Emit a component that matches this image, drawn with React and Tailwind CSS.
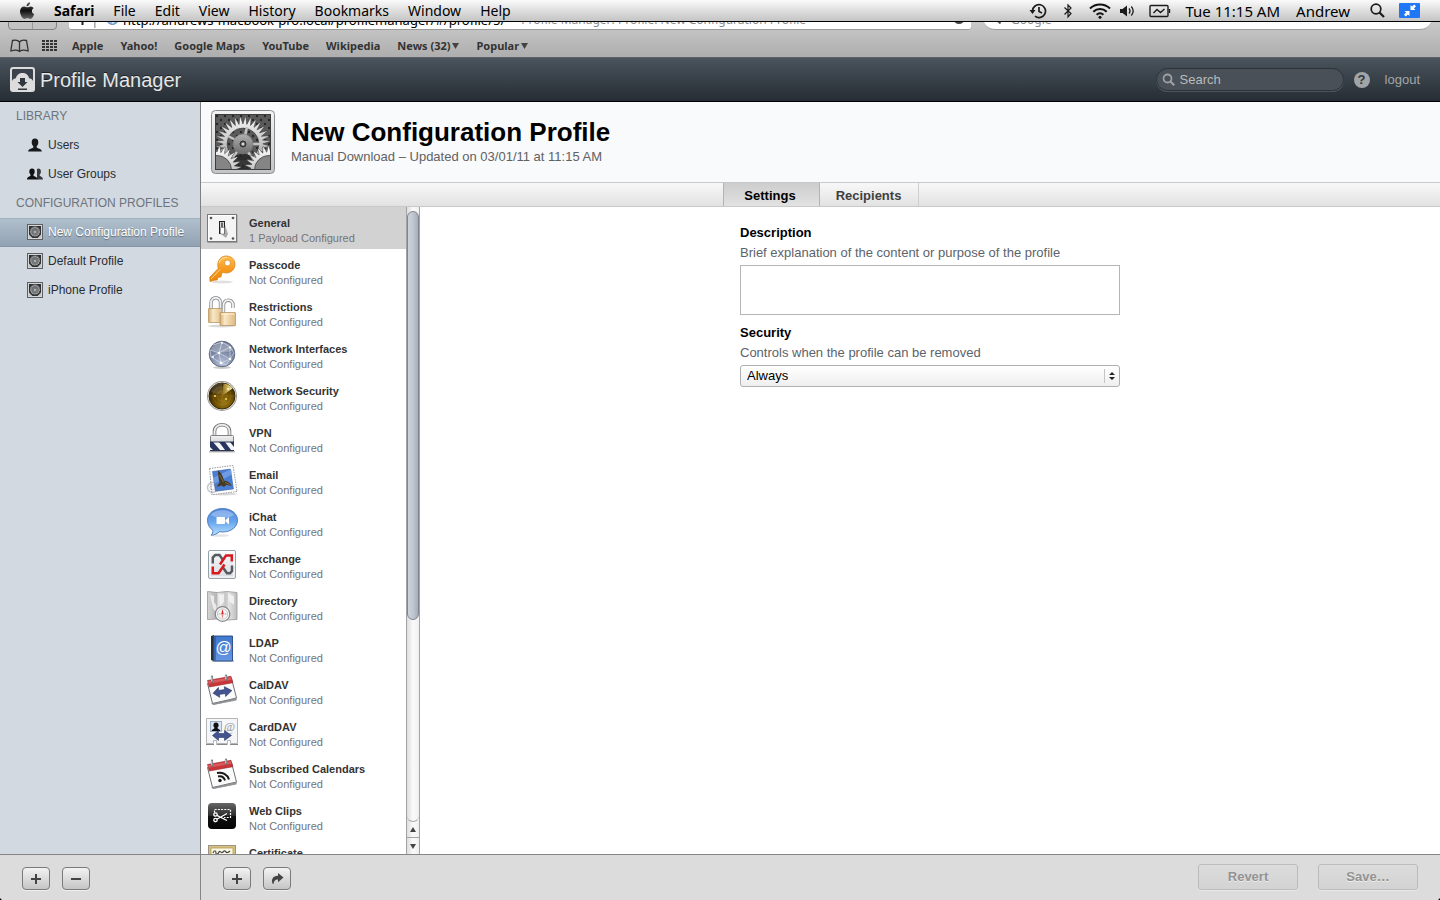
import { useState } from 'react';
import { clsx } from 'clsx';

// closed outline of a cog wheel with n pointed teeth
const gearPath = (cx, cy, inner, outer, n, turn = 0) => {
  const points = [];
  for (let i = 0; i < n; i++) {
    [[0, inner], [0.4, outer], [0.55, outer], [0.95, inner]].forEach(([step, r]) => {
      const a = ((i + step) / n) * Math.PI * 2 + turn;
      points.push(`${(cx + Math.cos(a) * r).toFixed(2)} ${(cy + Math.sin(a) * r).toFixed(2)}`);
    });
  }
  return `M${points.join('L')}Z`;
};

const Icon = ({ children, size = 32, className }) => (
  <svg className={clsx('shrink-0', className)} width={size} height={size} viewBox="0 0 32 32" aria-hidden="true">
    {children}
  </svg>
);

const GeneralIcon = () => (
  <Icon>
    <rect x="1.5" y="3" width="30" height="28" fill="#000" opacity="0.25" />
    <rect x="1.5" y="2.5" width="29" height="27" fill="#f4f4f4" stroke="#77797b" />
    <path d="M2.5 29V3.500H30" fill="none" stroke="#fff" />
    <g fill="#555">
      <circle cx="5" cy="6" r="1.300" />
      <circle cx="27" cy="6" r="1.300" />
      <circle cx="5" cy="26.500" r="1.300" />
      <circle cx="27" cy="26.500" r="1.300" />
    </g>
    <path d="M15 22l4-9 3 9-2 4z" fill="#aaa" />
    <rect x="13.500" y="9.500" width="5" height="12" fill="#d8d8d8" stroke="#222" />
    <path d="M15 10.500h2v5h-2z" fill="#666" />
    <path d="M14.500 15.500h4v6.500h-4z" fill="#fff" stroke="#555" strokeWidth="0.500" />
  </Icon>
);

const KeyIcon = () => (
  <Icon>
    <defs>
      <linearGradient id="key" x1="0" y1="0" x2="0" y2="1">
        <stop offset="0" stopColor="#ffc04d" />
        <stop offset="0.5" stopColor="#f79a20" />
        <stop offset="1" stopColor="#e9860c" />
      </linearGradient>
    </defs>
    <ellipse cx="16" cy="28" rx="11" ry="1.500" fill="#000" opacity="0.12" />
    <path
      fillRule="evenodd"
      d="M20 2c5.500 0 9 3.300 9 8.300 0 5-4 8.700-8.500 8.700-1.400 0-2.500-.3-3.500-.8L15.500 20l-.5 3-3 .3-.8 2.700-3 .3L4 27.500l-.2-4.300 8.400-8.700C10.500 8 14 2 20 2zm1.500 4a3 3 0 100 6 3 3 0 000-6z"
      fill="url(#key)"
      stroke="#d67c11"
      strokeWidth="0.700"
    />
    <path d="M5 25l9-9.500" stroke="#ffd48a" strokeWidth="1" />
    <path d="M13 9c.8-3.500 4-5.700 8-5.600" fill="none" stroke="#ffe0a6" strokeWidth="1" />
  </Icon>
);

const LocksIcon = () => (
  <Icon>
    <defs>
      <linearGradient id="brass" x1="0" x2="1">
        <stop offset="0" stopColor="#d2ae76" />
        <stop offset="0.3" stopColor="#f9e8c6" />
        <stop offset="1" stopColor="#dcb982" />
      </linearGradient>
    </defs>
    <ellipse cx="16" cy="30" rx="14" ry="1.500" fill="#000" opacity="0.15" />
    <path d="M5 13V7c0-7 9.500-7 9.500 0v6" fill="none" stroke="#8b8d90" strokeWidth="3.400" />
    <path d="M5 13V7c0-7 9.500-7 9.500 0v6" fill="none" stroke="#f0f1f1" strokeWidth="1.800" />
    <rect x="2.500" y="12.500" width="15" height="14" rx="0.500" fill="url(#brass)" stroke="#b58d55" strokeWidth="0.700" />
    <path d="M17.500 17V9c0-6.500 10-6.500 9.500.500V12" fill="none" stroke="#8b8d90" strokeWidth="3.400" />
    <path d="M17.500 17V9c0-6.500 10-6.500 9.500.500V12" fill="none" stroke="#f3f3f3" strokeWidth="1.800" />
    <rect x="14" y="16.500" width="15.500" height="13" rx="0.500" fill="url(#brass)" stroke="#b58d55" strokeWidth="0.700" />
    <path d="M15 18h13.500" stroke="#fff3d6" />
  </Icon>
);

const NetworkIcon = () => (
  <Icon>
    <defs>
      <radialGradient id="globe" cx="0.5" cy="0.85" r="0.9">
        <stop offset="0" stopColor="#b7c1d8" />
        <stop offset="0.5" stopColor="#7d89a6" />
        <stop offset="1" stopColor="#5c6988" />
      </radialGradient>
    </defs>
    <ellipse cx="16" cy="29.500" rx="9" ry="1.500" fill="#000" opacity="0.2" />
    <circle cx="16" cy="16" r="12.800" fill="url(#globe)" stroke="#626d85" />
    <g fill="none" stroke="#dfe5f2" strokeWidth="0.700" opacity="0.85">
      <path d="M4 12l9 3 11-6-8-5-9 3M13 15l2 10 9-4-11-6 3-11M15 25L5 19l8-4M24 9l0 12 4-6-4-6M5 19l-1-7M24 21l-4 6-5-2" />
    </g>
    <path d="M5 12C7 2 25 2 27 12c-6 3-16 3-22 0z" fill="#fff" opacity="0.25" />
    <g fill="#fff">
      <circle cx="13" cy="15" r="1.300" />
      <circle cx="24" cy="9.500" r="1.100" />
      <circle cx="15" cy="25" r="1.300" />
      <circle cx="24" cy="21" r="1.300" />
      <circle cx="7" cy="19" r="1" />
      <circle cx="16" cy="5" r="0.900" />
    </g>
  </Icon>
);

const RadarIcon = () => (
  <Icon>
    <defs>
      <radialGradient id="radar" cx="0.6" cy="0.75" r="0.7">
        <stop offset="0" stopColor="#9a7812" />
        <stop offset="0.6" stopColor="#644600" />
        <stop offset="1" stopColor="#2c1e00" />
      </radialGradient>
      <linearGradient id="sweep" x1="0" x2="1">
        <stop offset="0" stopColor="#8d6b10" />
        <stop offset="1" stopColor="#fff3a8" />
      </linearGradient>
    </defs>
    <circle cx="16" cy="16" r="15" fill="#9c9a94" />
    <circle cx="16" cy="16" r="14" fill="#ececea" />
    <circle cx="16" cy="16" r="13" fill="url(#radar)" stroke="#33270a" />
    <path d="M16 16L17.500 3.500c4 .3 7 2 9 5z" fill="url(#sweep)" />
    <g fill="none" stroke="#c9a444" strokeWidth="0.500" opacity="0.4">
      <circle cx="16" cy="16" r="5" />
      <circle cx="16" cy="16" r="9" />
      <path d="M3 16h26M16 3v26" />
    </g>
    <path d="M5 12C7 3 14 3 16 3.500V14C11 14 8 13 5 12z" fill="#fff" opacity="0.14" />
    <circle cx="9" cy="16" r="1" fill="#ffe27a" />
    <circle cx="20" cy="19" r="0.900" fill="#ffe27a" />
    <circle cx="22" cy="9" r="0.900" fill="#fff" />
  </Icon>
);

const VpnIcon = () => (
  <Icon>
    <defs>
      <linearGradient id="steel" x1="0" y1="0" x2="0" y2="1">
        <stop offset="0" stopColor="#f2f2f2" />
        <stop offset="1" stopColor="#b3b5b8" />
      </linearGradient>
    </defs>
    <rect x="3" y="29" width="26" height="1.500" fill="#000" opacity="0.25" />
    <path d="M8.500 14V9.500c0-9 15-9 15 0V14" fill="none" stroke="#707275" strokeWidth="3.600" />
    <path d="M8.500 14V9.500c0-9 15-9 15 0V14" fill="none" stroke="#ebebeb" strokeWidth="2" />
    <rect x="4.500" y="13.500" width="23" height="15.500" rx="1" fill="url(#steel)" stroke="#808286" />
    <rect x="4" y="20" width="24" height="8" fill="#f6f7fa" />
    <path d="M4 20h3l7 8H7l-3-3zM13 20h6l6 8h-6zM24 20h4v5z" fill="#27355f" />
    <path d="M4 20h24M4 28.500h24" stroke="#1e2847" strokeWidth="0.900" />
  </Icon>
);

const EmailIcon = () => (
  <Icon>
    <ellipse cx="18" cy="30" rx="13" ry="1.500" fill="#000" opacity="0.15" />
    <path d="M3.500 4.500L27 1.500l4 26-25 3.300z" fill="#fff" stroke="#97999d" strokeWidth="1" strokeDasharray="1.500 1" />
    <path d="M6.500 7.500l18-2.400 2.900 19.800L9.500 27.300z" fill="#4a7dd4" stroke="#335ea8" strokeWidth="0.600" />
    <path d="M7 14l18-9 .8 5.500L8 20z" fill="#8ab0ec" opacity="0.6" />
    <path d="M12 6.500c3 1.500 5 6 6 10 3 .5 7 2 7.500 5.500-2-1-4-1-5.500-1l-2 2-2.500-1.500-5 1.500 3-4.500C12.500 15 12 10.500 12 6.500z" fill="#453a26" />
    <path d="M13.500 11l4 7M19 18.500l5 2" stroke="#8c7747" strokeWidth="0.800" />
    <circle cx="6.500" cy="23.500" r="5" fill="none" stroke="#6f7686" strokeWidth="1.500" opacity="0.4" />
    <circle cx="6.500" cy="23.500" r="2.600" fill="none" stroke="#6f7686" strokeWidth="0.800" opacity="0.4" />
  </Icon>
);

const ChatIcon = () => (
  <Icon>
    <defs>
      <linearGradient id="bubble" x1="0" y1="0" x2="0" y2="1">
        <stop offset="0" stopColor="#4f86dd" />
        <stop offset="0.5" stopColor="#68a5ed" />
        <stop offset="1" stopColor="#b7e2ff" />
      </linearGradient>
    </defs>
    <ellipse cx="14" cy="29.500" rx="9" ry="1.300" fill="#000" opacity="0.1" />
    <path
      d="M16.500 2.500c8.500 0 15 5 15 11.700S25 26 16.500 26c-1 0-2-.1-3-.3-2 2-5 3.400-8.500 3.500 1.500-1.300 2-3 1.800-5C3.500 22 1.500 18.500 1.500 14.200 1.500 7.500 8 2.500 16.500 2.500z"
      fill="url(#bubble)"
      stroke="#4574b8"
      strokeWidth="0.900"
    />
    <path d="M5 9c3-6.500 20-6.500 23 0-5 3.500-18 3.500-23 0z" fill="#fff" opacity="0.3" />
    <rect x="10.500" y="11" width="8.500" height="7" rx="0.800" fill="#fff" />
    <path d="M19.500 14l3.500-3v7.500l-3.500-3z" fill="#fff" />
  </Icon>
);

const ExchangeIcon = () => (
  <Icon>
    <defs>
      <linearGradient id="tile" x1="0" y1="0" x2="0" y2="1">
        <stop offset="0" stopColor="#f8f9fa" />
        <stop offset="1" stopColor="#d7dce1" />
      </linearGradient>
    </defs>
    <rect x="2.500" y="2.500" width="27" height="28" rx="1.500" fill="url(#tile)" stroke="#99a2ab" />
    <rect x="4" y="4" width="24" height="25" fill="none" stroke="#fff" />
    <g fill="none" strokeWidth="2.500" strokeLinejoin="miter">
      <path d="M6.800 15.500V9.500l2.400-2.400h4.300l3.500 5" stroke="#555b60" />
      <path d="M17 19.500l4 5.800h3l2-2.300v-5.500" stroke="#555b60" />
      <path d="M14 16.500l6-9h5.800v6" stroke="#d91920" />
      <path d="M6.800 18.500v6.700h5.700l6-8.700" stroke="#d91920" />
    </g>
  </Icon>
);

const DirectoryIcon = () => (
  <Icon>
    <defs>
      <linearGradient id="map" x1="0" x2="1">
        <stop offset="0" stopColor="#d6d6d6" />
        <stop offset="0.3" stopColor="#b6b6b6" />
        <stop offset="0.32" stopColor="#eee" />
        <stop offset="0.62" stopColor="#c6c6c6" />
        <stop offset="0.65" stopColor="#ededed" />
        <stop offset="1" stopColor="#bdbdbd" />
      </linearGradient>
    </defs>
    <path d="M1.500 1.500l9.500 1 10-1 10 1v27l-10 .5-10-1-9.500.500z" fill="url(#map)" stroke="#979797" strokeWidth="0.800" />
    <path d="M4 5l4 1v6l3 4v8l-4-6zM13 5l5-1v8l-4 4zM22 4l6 2v9l-5-4z" fill="#f8f8f8" opacity="0.75" />
    <path d="M11 2.500V29M21 1.500V30" stroke="#999" strokeWidth="0.600" />
    <circle cx="16.500" cy="24" r="7.300" fill="#fff" stroke="#85878a" strokeWidth="1.300" />
    <circle cx="16.500" cy="24" r="5.200" fill="#f6f6f6" stroke="#b5b7b9" strokeWidth="0.800" />
    <path d="M16.500 19l1.200 5h-2.400z" fill="#d8252b" />
    <path d="M16.500 29l1.200-5h-2.400z" fill="#e88a8a" />
    <path d="M12.500 24h2M18.500 24h2" stroke="#777" strokeWidth="0.600" />
  </Icon>
);

const LdapIcon = () => (
  <Icon>
    <defs>
      <linearGradient id="book" x1="0" y1="0" x2="0" y2="1">
        <stop offset="0" stopColor="#3f78cd" />
        <stop offset="1" stopColor="#6697e3" />
      </linearGradient>
    </defs>
    <rect x="6" y="28" width="22" height="2" fill="#000" opacity="0.2" />
    <path d="M5 4l3-1v26l-3-1z" fill="#2b3138" />
    <path d="M7.500 4H26.500v25h-19z" fill="url(#book)" stroke="#244880" strokeWidth="0.900" />
    <path d="M9 4.500v24" stroke="#27528f" strokeWidth="1.200" />
    <text x="17.500" y="21" textAnchor="middle" fontSize="16" fill="#fff" fontFamily="Liberation Sans, sans-serif">
      @
    </text>
  </Icon>
);

const CalendarBase = ({ children }) => (
  <Icon>
    <path d="M5 29l25-5 .5 2.500L7 31z" fill="#000" opacity="0.35" />
    <path d="M1.500 9.500l24-5L30.500 24 6.500 29.500z" fill="#fbfbfb" stroke="#5e6063" strokeWidth="0.900" />
    <path d="M6.500 29.500l24-5.500v2L7 31z" fill="#8f9194" />
    <path d="M1.500 6.500L25 2.300l1.800 6.400L3.300 13z" fill="#c9363a" stroke="#9b2226" strokeWidth="0.600" />
    <path d="M2 7.200l23-4.100.6 2.700-23 4z" fill="#e37374" opacity="0.6" />
    <path d="M6 8V2.500M20 6V1.500" stroke="#6d6f72" strokeWidth="2.200" strokeLinecap="round" />
    <path d="M5.800 7V3M19.800 5V2" stroke="#eceded" strokeWidth="0.900" strokeLinecap="round" />
    {children}
  </Icon>
);

const SyncArrow = ({ x, y }) => (
  <g transform={`translate(${x} ${y})`}>
    <path d="M0 5l6-5v3h6V0l7 5-7 5V7H6v3z" fill="#42538f" stroke="#2b386a" strokeWidth="0.600" />
  </g>
);

const CalDavIcon = () => (
  <CalendarBase>
    <g transform="rotate(-8 16 18)">
      <SyncArrow x={7} y={13} />
    </g>
  </CalendarBase>
);

const SubscribedIcon = () => (
  <CalendarBase>
    <g fill="none" stroke="#191919" strokeWidth="2">
      <path d="M12 18.500c3.500-.8 6 .7 7 4" />
      <path d="M11 15c5.500-1.200 10.300 1.500 12 6.500" />
    </g>
    <circle cx="14" cy="22.500" r="1.700" fill="#191919" />
  </CalendarBase>
);

const CardDavIcon = () => (
  <Icon>
    <path d="M.5 2.500h31v25h-7v-3h-3v3H10.500v-3h-3v3h-7z" fill="#f5f6f7" stroke="#b3b5b7" />
    <path d="M0 28.500h8M10.500 28.500H21.500M24 28.500h8" stroke="#77797b" strokeWidth="0.900" />
    <rect x="4.500" y="5.500" width="11" height="10" fill="#d8e3f3" stroke="#8c9fbd" strokeWidth="0.800" />
    <path d="M10 6.500c1.700 0 2.600 1.200 2.600 2.800 0 1-.5 2-1.200 2.600.2 1 2.600 1 3.100 3.100h-9c.5-2.100 2.900-2.100 3.100-3.100-.7-.6-1.200-1.600-1.200-2.600 0-1.600.9-2.800 2.600-2.800z" fill="#111" />
    <text x="23.500" y="14.500" textAnchor="middle" fontSize="12" fill="#8f9296" fontFamily="Liberation Serif, serif">
      @
    </text>
    <SyncArrow x={6.500} y={14.500} />
  </Icon>
);

const WebClipIcon = () => (
  <Icon>
    <defs>
      <linearGradient id="clip" x1="0" y1="0" x2="0" y2="1">
        <stop offset="0" stopColor="#666" />
        <stop offset="0.5" stopColor="#2b2b2b" />
        <stop offset="0.52" stopColor="#111" />
        <stop offset="1" stopColor="#050505" />
      </linearGradient>
    </defs>
    <rect x="2" y="3" width="28" height="26" rx="4" fill="url(#clip)" />
    <path d="M8.500 12.500V9.500H24.500V17.500H18" fill="none" stroke="#fff" strokeWidth="1.200" strokeDasharray="2 1.200" />
    <g fill="none" stroke="#fff" strokeWidth="1.300">
      <circle cx="9.500" cy="14.500" r="1.700" />
      <circle cx="9.500" cy="20" r="1.700" />
      <path d="M10.800 15.300L21 20.500M10.800 19.200L21 13.500" />
    </g>
  </Icon>
);

const CertificateIcon = () => (
  <Icon>
    <rect x="2.500" y="3.500" width="27" height="25" fill="#d7c07f" stroke="#9a9488" />
    <rect x="5" y="6" width="22" height="20" fill="#fbf8e4" stroke="#b39b55" strokeWidth="0.800" />
    <path d="M7 11c1-3 3-3 3 0s2 1 3-1 2 2 4 0 2-1 3 0 2 1 4-1" fill="none" stroke="#444" strokeWidth="1.200" />
    <path d="M9 15h14M9 18h14" stroke="#a9a38a" />
  </Icon>
);

const GearTile = () => (
  <svg className="size-16 shrink-0" viewBox="0 0 64 64" aria-hidden="true">
    <defs>
      <linearGradient id="frame" x1="0" y1="0" x2="0" y2="1">
        <stop offset="0" stopColor="#f4f4f4" />
        <stop offset="1" stopColor="#c3c4c6" />
      </linearGradient>
      <linearGradient id="wheel" x1="0" y1="6" x2="0" y2="60" gradientUnits="userSpaceOnUse">
        <stop offset="0" stopColor="#fafafa" />
        <stop offset="1" stopColor="#8e8e8e" />
      </linearGradient>
      <linearGradient id="hub" x1="0" y1="0" x2="0" y2="1">
        <stop offset="0" stopColor="#b0b0b0" />
        <stop offset="1" stopColor="#6c6c6c" />
      </linearGradient>
      <linearGradient id="corner" x1="0" y1="38" x2="0" y2="62" gradientUnits="userSpaceOnUse">
        <stop offset="0" stopColor="#fff" />
        <stop offset="1" stopColor="#bdbdbd" />
      </linearGradient>
      <pattern id="mesh" width="8" height="8" patternUnits="userSpaceOnUse">
        <rect width="8" height="8" fill="#5a5a5a" />
        <circle cx="2" cy="2" r="1.200" fill="#262626" />
        <circle cx="6" cy="6" r="1.200" fill="#262626" />
      </pattern>
      <clipPath id="window">
        <rect x="5" y="5" width="54" height="54" />
      </clipPath>
    </defs>
    <rect x="0.500" y="0.500" width="63" height="63" rx="4" fill="url(#frame)" stroke="#8b8c8e" />
    <rect x="5" y="5" width="54" height="54" fill="url(#mesh)" />
    <g clipPath="url(#window)">
      <path
        fillRule="evenodd"
        d={`${gearPath(32, 34, 20, 27, 32)}M32 18a16 16 0 100 32 16 16 0 000-32Z`}
        fill="url(#wheel)"
        stroke="#333"
        strokeWidth="0.500"
      />
      <path d="M32 34l4-17M32 34h17M32 34L17 26M32 34L22 47M32 34l9 14" stroke="#c4c4c4" strokeWidth="2.500" />
      <path d="M20 60l4-14 8-3 8 3 4 14z" fill="#262626" opacity="0.85" />
      <path d={gearPath(6, 60, 18, 24, 28)} fill="url(#corner)" stroke="#333" strokeWidth="0.500" />
      <circle cx="6" cy="60" r="14.500" fill="#858585" stroke="#555" />
      <path d={gearPath(58, 60, 18, 24, 28, 0.1)} fill="url(#corner)" stroke="#333" strokeWidth="0.500" />
      <circle cx="58" cy="60" r="14.500" fill="#858585" stroke="#555" />
      <circle cx="32" cy="34" r="10" fill="url(#hub)" stroke="#777" strokeWidth="0.600" />
      <circle cx="32" cy="34" r="3" fill="#555" stroke="#2f2f2f" strokeWidth="1" />
      <circle cx="32" cy="34" r="1.500" fill="#d9d9d9" />
    </g>
    <rect x="4.500" y="4.500" width="55" height="55" fill="none" stroke="#3d3d3d" />
  </svg>
);

const ProfileIcon = () => (
  <svg className="shrink-0" width="16" height="16" viewBox="0 0 16 16" aria-hidden="true">
    <rect x="0.500" y="0.500" width="15" height="15" fill="#d3d5d7" stroke="#5d6064" />
    <rect x="2" y="2" width="12" height="12" fill="#303234" />
    <circle cx="8" cy="7.500" r="4.300" fill="#6d6f71" stroke="#a8aaac" strokeWidth="1.500" strokeDasharray="1.400 0.600" />
    <circle cx="8" cy="8" r="2.500" fill="#77797b" />
    <circle cx="8" cy="8" r="0.900" fill="#c6c6c6" />
    <path d="M2 14v-3.500l3.500 3.500zM14 14v-3.500L10.500 14z" fill="#c3c5c7" />
  </svg>
);

const UserIcon = () => (
  <svg className="shrink-0" width="16" height="16" viewBox="0 0 16 16" aria-hidden="true">
    <path d="M8 1.500c2.200 0 3.400 1.500 3.300 3.700 0 1.700-.6 3-1.600 3.900v1.400c.8 1 5.100 1 5.100 4H1.200c0-3 4.300-3 5.100-4V9.100c-1-.9-1.600-2.200-1.600-3.900C4.600 3 5.800 1.500 8 1.500z" fill="#17191b" />
  </svg>
);

const GroupIcon = () => (
  <svg className="shrink-0" width="16" height="16" viewBox="0 0 16 16" aria-hidden="true">
    <path d="M11.300 2.500c1.700 0 2.700 1.200 2.600 3 0 1.400-.4 2.400-1.200 3.100v1.100c.7.900 3.300 1 3.300 3.800h-6V3.300c.4-.5.800-.8 1.300-.8z" fill="#33373b" />
    <path d="M5 2.500c1.800 0 2.800 1.200 2.700 3 0 1.400-.5 2.400-1.200 3.100v1.100c.7.900 4 1 4 3.800H0c0-2.800 2.800-2.900 3.500-3.800V8.600c-.8-.7-1.200-1.700-1.200-3.100 0-1.800 1-3 2.700-3z" fill="#101112" />
  </svg>
);

const menus = ['File', 'Edit', 'View', 'History', 'Bookmarks', 'Window', 'Help'];
const bookmarks = ['Apple', 'Yahoo!', 'Google Maps', 'YouTube', 'Wikipedia', 'News (32)', 'Popular'];

const payloads = [
  { name: 'General', status: '1 Payload Configured', icon: GeneralIcon },
  { name: 'Passcode', icon: KeyIcon },
  { name: 'Restrictions', icon: LocksIcon },
  { name: 'Network Interfaces', icon: NetworkIcon },
  { name: 'Network Security', icon: RadarIcon },
  { name: 'VPN', icon: VpnIcon },
  { name: 'Email', icon: EmailIcon },
  { name: 'iChat', icon: ChatIcon },
  { name: 'Exchange', icon: ExchangeIcon },
  { name: 'Directory', icon: DirectoryIcon },
  { name: 'LDAP', icon: LdapIcon },
  { name: 'CalDAV', icon: CalDavIcon },
  { name: 'CardDAV', icon: CardDavIcon },
  { name: 'Subscribed Calendars', icon: SubscribedIcon },
  { name: 'Web Clips', icon: WebClipIcon },
  { name: 'Certificate', icon: CertificateIcon },
];

const MenuBar = () => (
  <div className="flex h-[22px] shrink-0 items-center justify-between border-b border-black bg-gradient-to-b from-[#fafafa] to-[#c4c4c4] pr-5 pl-[19px] font-['Noto_Sans',sans-serif] text-sm leading-5 text-black">
    <nav className="flex items-center gap-[19px]">
      <svg width="16" height="18" viewBox="0 0 16 18" aria-hidden="true">
        <defs>
          <linearGradient id="apple" x1="0" y1="0" x2="0" y2="1">
            <stop offset="0" stopColor="#555" />
            <stop offset="0.5" stopColor="#111" />
            <stop offset="1" stopColor="#666" />
          </linearGradient>
        </defs>
        <path
          d="M11 .3c.1 1-.3 2-.9 2.700-.6.8-1.600 1.300-2.600 1.300-.1-1 .4-2 .9-2.600C9 .9 10.100.4 11 .3zM14.600 6.200c-1.100.7-1.700 1.600-1.700 2.900 0 1.500.9 2.600 2.200 3.100-.5 1.500-1.900 4.700-3.700 4.700-1.100 0-1.500-.7-2.900-.7s-1.900.7-2.900.7C3.600 17 1 13 1 9.500c0-3.300 2.100-5.100 4.200-5.100 1.300 0 2.400.9 3.200.9.800 0 2-.9 3.500-.9 1.100 0 2.100.7 2.700 1.800z"
          fill="url(#apple)"
        />
      </svg>
      <button className="font-bold">Safari</button>
      {menus.map((menu) => (
        <button key={menu}>{menu}</button>
      ))}
    </nav>
    <div className="flex items-center">
      <svg className="mr-4" width="18" height="16" viewBox="0 0 18 16" fill="none" stroke="#1b1b1b" strokeWidth="1.700" aria-hidden="true">
        <path d="M3.500 8A6.500 6.500 0 1 1 6 13.200M10 4v4.500l3 1.500" />
        <path d="M.5 7h6L3.500 11z" fill="#1b1b1b" stroke="none" />
      </svg>
      <svg className="mr-4" width="10" height="16" viewBox="0 0 10 16" fill="none" stroke="#1b1b1b" strokeWidth="1.200" aria-hidden="true">
        <path d="M1.500 4.500l6.500 6L5 14V2l3 3-6.500 6.500" />
      </svg>
      <svg className="mr-2" width="22" height="16" viewBox="0 0 22 16" fill="none" stroke="#111" strokeWidth="2" aria-hidden="true">
        <path d="M1 5.500c5.500-5.300 14.500-5.300 20 0M4.300 8.700c3.800-3.700 9.600-3.700 13.400 0M7.600 11.800c2-1.900 4.800-1.900 6.800 0" />
        <circle cx="11" cy="14.200" r="1.500" fill="#111" stroke="none" />
      </svg>
      <svg className="mr-[14px]" width="16" height="14" viewBox="0 0 16 14" fill="none" stroke="#1b1b1b" strokeWidth="1.300" aria-hidden="true">
        <path d="M1 5h2.500L8 1.500v11L3.500 9H1z" fill="#1b1b1b" stroke="none" />
        <path d="M10 4.500c1.200 1.500 1.200 3.500 0 5M12.300 2.500c2.300 2.700 2.300 6.300 0 9" />
      </svg>
      <svg className="mr-[14px]" width="22" height="14" viewBox="0 0 22 14" fill="none" stroke="#1b1b1b" strokeWidth="1.400" aria-hidden="true">
        <rect x="1" y="1.500" width="18" height="11" rx="1" />
        <path d="M20.500 5v4M4.500 9L8 5.500l3.500 3L15.500 5" />
      </svg>
      <span className="mr-4 text-[15px]">Tue 11:15 AM</span>
      <button className="mr-5 text-[15px]">Andrew</button>
      <svg className="mr-[14px]" width="15" height="15" viewBox="0 0 15 15" fill="none" stroke="#1b1b1b" strokeWidth="1.700" aria-hidden="true">
        <circle cx="6" cy="6" r="4.800" />
        <path d="M9.500 9.500l4.500 4.500" strokeWidth="2.200" />
      </svg>
      <svg width="21" height="15" viewBox="0 0 21 15" aria-hidden="true">
        <rect width="21" height="15" rx="1" fill="#1f77f5" />
        <path d="M11.500 2v5h5l-1.600-1.600L17 3.300 15.200 1.500l-2.100 2.100zM10.500 13V8h-5l1.600 1.600L5 11.700l1.800 1.800 2.100-2.100z" fill="#fff" />
      </svg>
    </div>
  </div>
);

// only the lower edge of the address row shows below the menu bar
const BrowserBar = () => (
  <div className="shrink-0 bg-gradient-to-b from-[#c9c9c9] to-[#adadad] font-['Noto_Sans',sans-serif]">
    <div className="flex h-2 items-end gap-3 overflow-hidden px-2 text-xs leading-4">
      <div className="flex h-6 w-[49px] shrink-0 rounded border border-[#828282] bg-[#c3c3c3]">
        <span className="w-6 border-r border-[#9a9a9a]" />
      </div>
      <div className="flex h-6 flex-1 items-start overflow-hidden rounded-b-[3px] border-b border-[#9a9a9a] bg-white pt-[6px] pl-[11px] whitespace-nowrap text-black">
        <svg className="mr-[10px] shrink-0" width="16" height="16" viewBox="0 0 16 16" stroke="#222" strokeWidth="2" aria-hidden="true">
          <path d="M2.500 6v7M15.500 0v16" />
          <path d="M15.500 0v16" stroke="#ccc" />
        </svg>
        <svg className="mr-1 shrink-0" width="13" height="13" viewBox="0 0 13 13" aria-hidden="true">
          <circle cx="6.500" cy="6.500" r="6" fill="#8dbbe6" stroke="#5b88b8" />
          <path d="M4 7l3-2 2 3-2 4z" fill="#e9f3fb" />
        </svg>
        <span className="mr-4 text-[13px]">http://andrews-macbook-pro.local/profilemanager/#/profile/5/</span>
        <span className="text-[#8b8b8b]">Profile Manager: Profile: New Configuration Profile</span>
        <svg className="mr-[6px] ml-auto shrink-0" width="12" height="13" viewBox="0 0 12 13" fill="none" stroke="#444" strokeWidth="2" aria-hidden="true">
          <circle cx="6" cy="6.500" r="4.500" />
        </svg>
      </div>
      <div className="flex h-6 w-[449px] shrink-0 items-start gap-2.5 rounded-full border-b border-[#9a9a9a] bg-white pt-[6px] pl-[6px] text-[#8b8b8b]">
        <svg width="12" height="12" viewBox="0 0 12 12" fill="none" stroke="#555" strokeWidth="2" aria-hidden="true">
          <circle cx="5" cy="5" r="3.500" />
          <path d="M7.500 7.500l4 4" />
        </svg>
        Google
      </div>
    </div>
    <nav className="flex h-7 items-center gap-[17px] border-b border-[#5d6368] pt-[5px] pl-[10px] text-[11px] leading-4 font-bold text-[#333] [text-shadow:0_1px_0_#ccc]">
      <button aria-label="Show all bookmarks" className="-mr-1">
        <svg width="19" height="14" viewBox="0 0 19 14" fill="none" stroke="#333" strokeWidth="1.300">
          <path d="M9.500 12V3C8 1 4.500 1 2.500 1.500L1 10.500v1.500c3-1 6.500-1 8.500.500 2-1.500 5.500-1.500 8.500-.500v-1.500L16.500 1.500C14.500 1 11 1 9.500 3" />
        </svg>
      </button>
      <button aria-label="Top sites" className="-mr-0.5">
        <svg width="15" height="12" viewBox="0 0 15 12" fill="#333">
          {[0, 4, 8, 12].map((x) => [0, 3, 6, 9].map((y) => <rect key={`${x}-${y}`} x={x} y={y} width="3" height="2" />))}
        </svg>
      </button>
      {bookmarks.map((name, i) => (
        <button key={name} className="flex items-center">
          {name}
          {i > 4 && (
            <svg className="ml-0.5" width="7" height="6" viewBox="0 0 7 6" fill="#444" aria-hidden="true">
              <path d="M0 0h7L3.500 6z" />
            </svg>
          )}
        </button>
      ))}
    </nav>
  </div>
);

const AppHeader = () => (
  <header className="flex h-11 shrink-0 items-center border-b border-black bg-gradient-to-b from-[#4a545d] to-[#262d34] pr-5 pl-[10px]">
    <svg className="mr-[5px]" width="25" height="25" viewBox="0 0 25 25" aria-hidden="true">
      <rect width="25" height="25" rx="3" fill="#dcdcdc" />
      <path d="M2 11V3.500C2 2.500 2.500 2 3.500 2h18c1 0 1.500.5 1.500 1.500V14c-1-2-2-2.500-4-2.800C18.500 8 16 6 12.500 6S6.500 8 6 11.200C4 11.500 3 12 2 14z" fill="#3a434b" />
      <path d="M10 11h5v4h2.500l-5 5-5-5H10zM8 21.500h9V23H8z" fill="#2f363d" />
    </svg>
    <h1 className="flex-1 text-xl text-[#e6e6e6] [text-shadow:0_-1px_0_#1c2228]">Profile Manager</h1>
    <label className="flex h-[23px] w-[188px] items-center gap-[5px] rounded-full border border-[#2b3238] bg-[#495057] px-[5px] shadow-[0_1px_0_#4c555d]">
      <svg className="shrink-0" width="13" height="13" viewBox="0 0 13 13" fill="none" stroke="#9da1a5" strokeWidth="1.800" aria-hidden="true">
        <circle cx="5.500" cy="5.500" r="4" />
        <path d="M8.500 8.500l3.800 3.800" strokeWidth="2.200" />
      </svg>
      <input aria-label="Search" placeholder="Search" className="w-full min-w-0 bg-transparent text-[13px] leading-4 text-[#ccc] outline-none placeholder:text-[#b9bbbd]" />
    </label>
    <button aria-label="Help" className="mr-[15px] ml-[10px] flex size-4 items-center justify-center rounded-full bg-[#a2a5a8] text-[13px] leading-4 font-bold text-[#2e353b]">
      ?
    </button>
    <a href="#logout" className="text-[13px] text-[#a3a6a9]">
      logout
    </a>
  </header>
);

const Sidebar = ({ selected, onSelect }) => {
  const row = (name, RowIcon) => (
    <li key={name}>
      <button
        onClick={() => onSelect(name)}
        className={clsx(
          'flex h-[29px] w-full items-center gap-[5px] pb-0.5 pl-[27px] whitespace-nowrap',
          selected === name
            ? 'border-y border-t-[#9fb0c0] border-b-[#8595a5] bg-gradient-to-b from-[#b0bfcc] to-[#91a2b3] text-white [text-shadow:0_1px_1px_#5c6a78]'
            : 'text-[#2a2d30]'
        )}
      >
        <RowIcon />
        {name}
      </button>
    </li>
  );

  return (
    <aside className="w-[201px] shrink-0 border-r border-[#7e8082] bg-[#d2d9e1] text-xs">
      <h2 className="flex h-[29px] items-center pb-0.5 pl-4 text-[#6d747b]">LIBRARY</h2>
      <ul>
        {row('Users', UserIcon)}
        {row('User Groups', GroupIcon)}
      </ul>
      <h2 className="flex h-[29px] items-center pb-0.5 pl-4 text-[#6d747b]">CONFIGURATION PROFILES</h2>
      <ul>{['New Configuration Profile', 'Default Profile', 'iPhone Profile'].map((name) => row(name, ProfileIcon))}</ul>
    </aside>
  );
};

const ScrollBar = () => (
  <div className="flex w-[14px] shrink-0 flex-col border-x border-[#a3a3a3] bg-gradient-to-r from-[#dedede] via-[#fafafa] to-[#f0f0f0]">
    <div className="min-h-0 flex-1 rounded-b-lg border-b border-[#a3a3a3] pt-1">
      <div className="h-[67%] rounded-full border border-[#7f868f] bg-gradient-to-r from-[#cdd2da] via-[#c0c7d0] to-[#a5adb8]" />
    </div>
    <button aria-label="Scroll up" className="flex h-4 items-center justify-center border-b border-[#a3a3a3]">
      <svg width="6" height="5" viewBox="0 0 6 5" fill="#444">
        <path d="M3 0l3 5H0z" />
      </svg>
    </button>
    <button aria-label="Scroll down" className="flex h-4 items-center justify-center">
      <svg width="6" height="5" viewBox="0 0 6 5" fill="#444">
        <path d="M3 5L0 0h6z" />
      </svg>
    </button>
  </div>
);

const PayloadList = ({ active, onSelect }) => (
  <div className="flex w-[219px] shrink-0">
    <ul className="min-w-0 flex-1 overflow-hidden">
      {payloads.map(({ name, status = 'Not Configured', icon: PayloadIcon }) => (
        <li key={name}>
          <button
            onClick={() => onSelect(name)}
            className={clsx('flex h-[42px] w-full items-center gap-[11px] pl-[5px] text-left text-[11px] leading-[15px]', active === name && 'bg-[#d2d2d2]')}
          >
            <PayloadIcon />
            <span className="pt-1.5">
              <span className="block font-bold text-[#333]">{name}</span>
              <span className="block text-[#757575]">{status}</span>
            </span>
          </button>
        </li>
      ))}
    </ul>
    <ScrollBar />
  </div>
);

const SettingsForm = () => (
  <form className="mx-auto w-[380px] pt-4 text-[13px] leading-5">
    <label htmlFor="description" className="block font-bold text-black">
      Description
    </label>
    <p className="text-[#5c636a]">Brief explanation of the content or purpose of the profile</p>
    <textarea id="description" className="mt-0.5 block h-[50px] w-full resize-none border border-[#b5b5b5] bg-white px-1.5 outline-none" />
    <label htmlFor="security" className="mt-2 block font-bold text-black">
      Security
    </label>
    <p className="text-[#5c636a]">Controls when the profile can be removed</p>
    <div className="relative mt-0.5">
      <select id="security" className="block h-[22px] w-full appearance-none rounded-[3px] border border-[#b0b0b0] bg-gradient-to-b from-white to-[#efefef] px-1.5 text-[13px] text-black outline-none">
        <option>Always</option>
        <option>With Authorization</option>
        <option>Never</option>
      </select>
      <span className="pointer-events-none absolute inset-y-1 right-[5px] flex items-center border-l border-[#c5c5c5] pl-1">
        <svg width="6" height="8" viewBox="0 0 6 8" fill="#222" aria-hidden="true">
          <path d="M3 0l3 3H0zM3 8L0 5h6z" />
        </svg>
      </span>
    </div>
  </form>
);

const ToolButton = ({ label, children }) => (
  <button aria-label={label} className="flex h-[23px] w-7 items-center justify-center rounded border border-[#7a7a7a] bg-gradient-to-b from-[#f3f3f3] to-[#c5c5c5] shadow-[0_1px_0_#eee]">
    <svg width="14" height="12" viewBox="0 0 14 12" fill="#444" aria-hidden="true">
      {children}
    </svg>
  </button>
);

const ActionButton = ({ children }) => (
  <button
    disabled
    className="h-[26px] w-[100px] rounded-[3px] border border-[#bcbcbc] bg-gradient-to-b from-[#dcdcdc] to-[#d3d3d3] text-[13px] font-bold text-[#929292] shadow-[0_1px_0_#e8e8e8] [text-shadow:0_1px_0_#eee]"
  >
    {children}
  </button>
);

const Footer = () => (
  <footer className="flex h-[46px] shrink-0 border-t border-[#868686] bg-[#dcdcdc]">
    <div className="flex w-[201px] shrink-0 items-center gap-3 border-r border-[#868686] pt-0.5 pl-[22px]">
      <ToolButton label="Add profile">
        <path d="M6 1h2v4h4v2H8v4H6V7H2V5h4z" />
      </ToolButton>
      <ToolButton label="Remove profile">
        <path d="M2 5h10v2H2z" />
      </ToolButton>
    </div>
    <div className="flex flex-1 items-center gap-3 pt-0.5 pl-[22px]">
      <ToolButton label="Add payload">
        <path d="M6 1h2v4h4v2H8v4H6V7H2V5h4z" />
      </ToolButton>
      <ToolButton label="Share profile">
        <path d="M8 0l5.500 4.500L8 9.200V6.500c-2.500 0-4 1-4.500 4.500H2.800C.8 7 2.500 2.800 8 2.700z" />
      </ToolButton>
    </div>
    <div className="flex items-center gap-5 pr-[22px] pb-px">
      <ActionButton>Revert</ActionButton>
      <ActionButton>Save…</ActionButton>
    </div>
  </footer>
);

const App = () => {
  const [profile, setProfile] = useState('New Configuration Profile');
  const [payload, setPayload] = useState('General');

  return (
    <div className="bg-black">
      <div className="flex h-screen flex-col overflow-hidden rounded-b-[4px] bg-white font-['Liberation_Sans',Arial,sans-serif]">
        <MenuBar />
        <BrowserBar />
        <AppHeader />
        <div className="flex min-h-0 flex-1">
          <Sidebar selected={profile} onSelect={setProfile} />
          <main className="flex min-w-0 flex-1 flex-col">
            <div className="flex h-20 shrink-0 items-center gap-4 bg-[#f9fafc] pl-[10px]">
              <GearTile />
              <div className="pb-0.5">
                <h2 className="text-[26px] leading-8 font-bold text-black">New Configuration Profile</h2>
                <p className="text-[13px] leading-[18px] text-[#616161]">Manual Download – Updated on 03/01/11 at 11:15 AM</p>
              </div>
            </div>
            <div role="tablist" className="flex h-[25px] shrink-0 justify-center border-y border-[#c9c9c9] bg-gradient-to-b from-[#f8f8f8] to-[#e2e2e2] text-[13px] font-bold">
              <button role="tab" aria-selected="true" className="w-[97px] border-x border-[#b3b3b3] bg-gradient-to-b from-[#cdcdcd] to-[#e2e2e2] pt-0.5 pr-0.5 text-black">
                Settings
              </button>
              <button role="tab" aria-selected="false" className="w-[99px] border-r border-[#cfcfcf] pt-0.5 text-[#3f3f3f]">
                Recipients
              </button>
            </div>
            <div className="flex min-h-0 flex-1">
              <PayloadList active={payload} onSelect={setPayload} />
              <div className="min-w-0 flex-1">
                <SettingsForm />
              </div>
            </div>
          </main>
        </div>
        <Footer />
      </div>
    </div>
  );
};

export default App;
